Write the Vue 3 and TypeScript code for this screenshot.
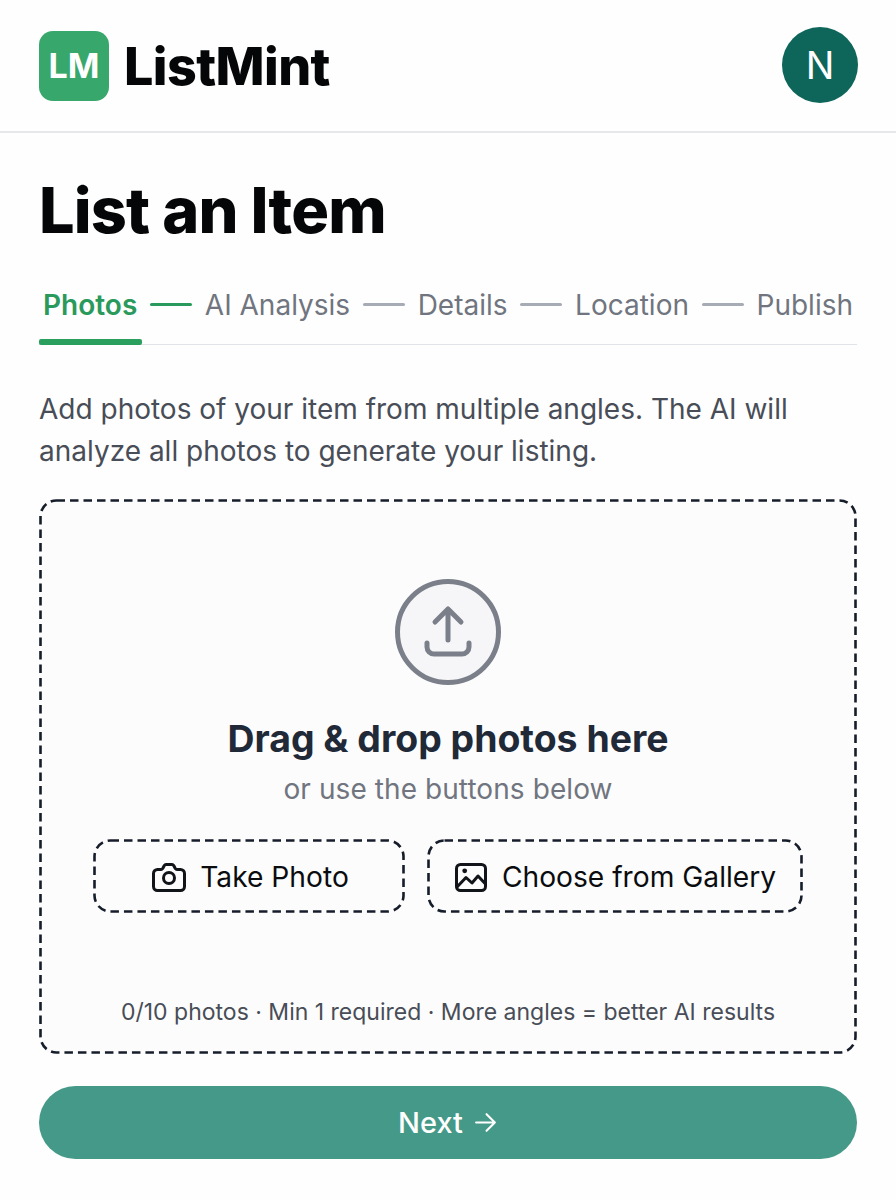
<template>
  <div class="page">
    <header class="top-bar">
      <div class="brand">
        <div class="logo">LM</div>
        <span class="brand-name">ListMint</span>
      </div>
      <div class="avatar">N</div>
    </header>

    <main class="content">
      <h1>List an Item</h1>

      <nav class="steps">
        <template v-for="(step, i) in steps" :key="step">
          <span class="step" :class="{ active: i === 0 }">{{ step }}</span>
          <span v-if="i < steps.length - 1" class="connector" :class="{ active: i === 0 }"></span>
        </template>
        <span class="steps-marker"></span>
      </nav>

      <p class="intro">
        Add photos of your item from multiple angles. The AI will<br />
        analyze all photos to generate your listing.
      </p>

      <section class="drop-zone">
        <svg class="dash" aria-hidden="true"><rect class="dash-rect" /></svg>

        <svg class="upload-icon" viewBox="0 0 106 106" fill="none" stroke="#7a7f89" stroke-linecap="round" stroke-linejoin="round">
          <circle cx="53" cy="53" r="50.500" fill="#f6f6f8" stroke-width="5" />
          <path d="M53 61V30.500M40 43l13-13 13 13" stroke-width="5" />
          <path d="M32 64v4a7 7 0 0 0 7 7h28a7 7 0 0 0 7-7v-4" stroke-width="5" />
        </svg>

        <h2>Drag &amp; drop photos here</h2>
        <p class="sub">or use the buttons below</p>

        <div class="actions">
          <button type="button" class="pick take">
            <svg class="dash" aria-hidden="true"><rect class="dash-rect" /></svg>
            <svg class="btn-icon" viewBox="0 0 34 34" fill="none" stroke="#111418" stroke-width="3" stroke-linecap="round" stroke-linejoin="round">
              <path d="M5.500 9.500H9a2 2 0 0 0 1.700-.95l1.600-3.100a2 2 0 0 1 1.700-.95h6a2 2 0 0 1 1.700.95l1.600 3.100A2 2 0 0 0 25 9.500h3.500a4 4 0 0 1 4 4v13a4 4 0 0 1-4 4h-23a4 4 0 0 1-4-4v-13a4 4 0 0 1 4-4z" />
              <circle cx="17" cy="18" r="5.500" />
            </svg>
            Take Photo
          </button>
          <button type="button" class="pick gallery">
            <svg class="dash" aria-hidden="true"><rect class="dash-rect" /></svg>
            <svg class="btn-icon" viewBox="0 0 34 34" fill="none" stroke="#111418" stroke-width="3" stroke-linecap="round" stroke-linejoin="round">
              <rect x="2.500" y="4.500" width="29" height="26" rx="4" />
              <circle cx="10.700" cy="10.800" r="2.400" fill="#111418" stroke="none" />
              <path d="M3 27l9-9.500 6 5.500 6-7 7.500 8" />
            </svg>
            Choose from Gallery
          </button>
        </div>

        <p class="hint">0/10 photos · Min 1 required · More angles = better AI results</p>
      </section>

      <button type="button" class="next">
        Next
        <svg class="next-arrow" viewBox="0 0 24 24" fill="none" stroke="#ffffff" stroke-width="2" stroke-linecap="round" stroke-linejoin="round">
          <path d="M3 12h18M13 4l8 8-8 8" />
        </svg>
      </button>
    </main>
  </div>
</template>

<script setup lang="ts">
const steps: string[] = ['Photos', 'AI Analysis', 'Details', 'Location', 'Publish']
</script>

<style>
html,
body {
  background: #fefefe;
}
</style>

<style scoped>
.page {
  width: 896px;
  height: 1200px;
  overflow: hidden;
  font-family: Inter, "Liberation Sans", sans-serif;
  color: #050608;
}
.top-bar {
  height: 133px;
  box-sizing: border-box;
  padding: 0 38px 0 39px;
  border-bottom: 2px solid #e6e8ec;
  display: flex;
  align-items: center;
  justify-content: space-between;
}
.brand {
  display: flex;
  align-items: center;
  gap: 15px;
}
.logo {
  width: 70px;
  height: 70px;
  border-radius: 14px;
  background: #38a76c;
  color: #fff;
  font-size: 34px;
  font-weight: 700;
  display: flex;
  align-items: center;
  justify-content: center;
}
.brand-name {
  font-size: 52px;
  font-weight: 800;
  letter-spacing: -0.6px;
  padding-top: 2px;
}
.avatar {
  width: 76px;
  height: 76px;
  margin-bottom: 2px;
  border-radius: 50%;
  background: #0e655a;
  color: #fff;
  font-size: 38px;
  font-weight: 400;
  display: flex;
  align-items: center;
  justify-content: center;
}
.content {
  padding: 0 39px;
}
h1 {
  margin: 41px 0 0;
  font-size: 63px;
  line-height: 72px;
  font-weight: 800;
  letter-spacing: -0.85px;
}
.steps {
  position: relative;
  margin-top: 38px;
  height: 61px;
  box-sizing: border-box;
  padding: 0 4px 19px;
  border-bottom: 1px solid #dfe2e6;
  display: flex;
  align-items: center;
  justify-content: space-between;
}
.step {
  font-size: 28px;
  color: #70757f;
  white-space: nowrap;
}
.step.active {
  color: #2a9a5c;
  font-weight: 600;
}
.connector {
  width: 42px;
  height: 3px;
  border-radius: 2px;
  background: #a6abb5;
}
.connector.active {
  background: #2a9a5c;
}
.steps-marker {
  position: absolute;
  left: 0;
  bottom: -1px;
  width: 103px;
  height: 6px;
  border-radius: 2px;
  background: #2a9f5e;
}
.intro {
  margin: 43px 0 0;
  font-size: 28px;
  line-height: 42px;
  color: #484d57;
}
.drop-zone {
  position: relative;
  margin-top: 27px;
  height: 555px;
  box-sizing: border-box;
  border-radius: 16px;
  background: #fcfcfc;
  padding-top: 80px;
  display: flex;
  flex-direction: column;
  align-items: center;
}
.dash {
  position: absolute;
  inset: 0;
  width: 100%;
  height: 100%;
  pointer-events: none;
}
.dash-rect {
  x: 1.5px;
  y: 1.5px;
  width: calc(100% - 3px);
  height: calc(100% - 3px);
  rx: 16px;
  fill: none;
  stroke: #161d2a;
  stroke-width: 2.6px;
  stroke-dasharray: 8.5 5;
}
.upload-icon {
  width: 106px;
  height: 106px;
}
h2 {
  margin: 32px 0 0;
  font-size: 37.4px;
  line-height: 44px;
  font-weight: 700;
  color: #1f2937;
}
.sub {
  margin: 8px 0 0;
  font-size: 28px;
  line-height: 40px;
  letter-spacing: 0.08px;
  color: #70757f;
}
.actions {
  margin-top: 30px;
  display: flex;
  gap: 22px;
}
.pick {
  position: relative;
  height: 74px;
  border: none;
  background: transparent;
  font-family: inherit;
  font-size: 28.2px;
  color: #0b0c0f;
  display: flex;
  align-items: center;
  justify-content: center;
  gap: 14px;
  padding: 2px 0 0;
}
.take {
  width: 312px;
  padding-left: 3px;
}
.gallery {
  width: 376px;
}
.btn-icon {
  width: 34px;
  height: 34px;
}
.hint {
  margin: 84px 0 0;
  font-size: 23px;
  line-height: 30px;
  color: #484d57;
}
.next {
  margin-top: 32px;
  width: 100%;
  height: 73px;
  border: none;
  border-radius: 37px;
  background: #449988;
  color: #fff;
  font-family: inherit;
  font-size: 29px;
  font-weight: 500;
  display: flex;
  align-items: center;
  justify-content: center;
  gap: 10px;
}
.next-arrow {
  width: 25px;
  height: 25px;
}
</style>
